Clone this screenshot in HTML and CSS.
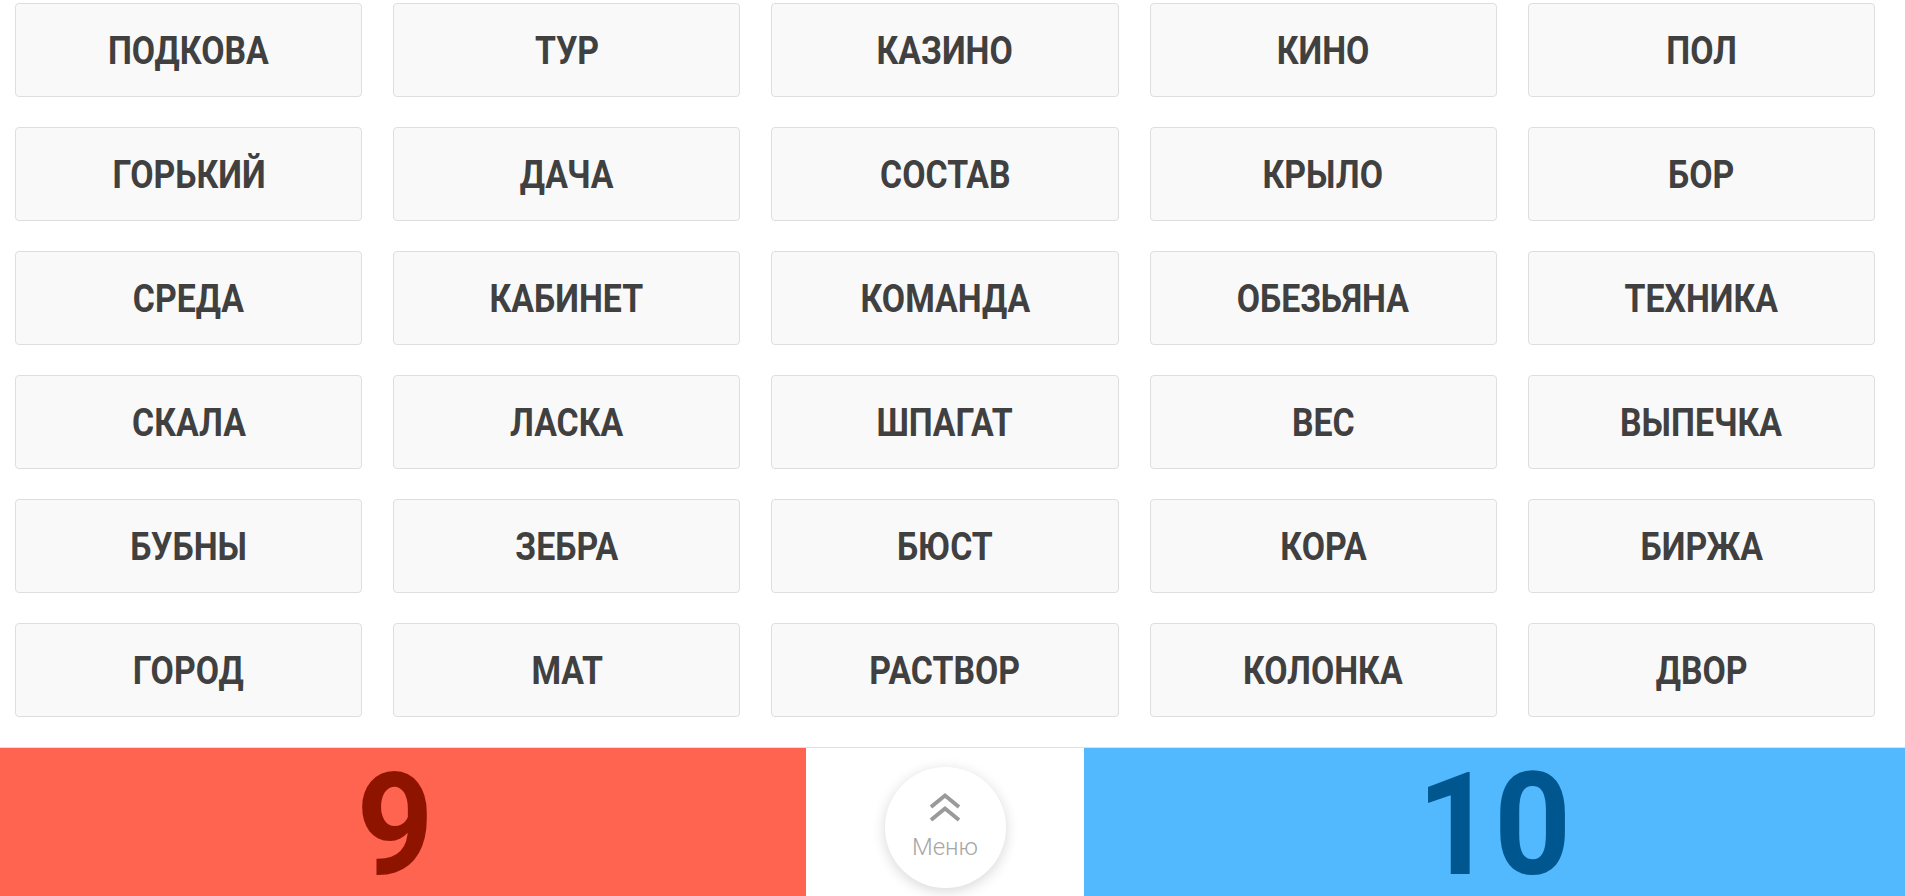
FILE: index.html
```html
<!DOCTYPE html>
<html lang="ru">
<head>
  <meta charset="UTF-8" />
  <meta name="viewport" content="width=device-width, initial-scale=1.0"/>
  <title>Игра</title>
  <link rel="stylesheet" href="styles.css">
</head>
<body>
  <div class="board">
    <div class="card"><span>ПОДКОВА</span></div>
    <div class="card"><span>ТУР</span></div>
    <div class="card"><span>КАЗИНО</span></div>
    <div class="card"><span>КИНО</span></div>
    <div class="card"><span>ПОЛ</span></div>

    <div class="card"><span>ГОРЬКИЙ</span></div>
    <div class="card"><span>ДАЧА</span></div>
    <div class="card"><span>СОСТАВ</span></div>
    <div class="card"><span>КРЫЛО</span></div>
    <div class="card"><span>БОР</span></div>

    <div class="card"><span>СРЕДА</span></div>
    <div class="card"><span>КАБИНЕТ</span></div>
    <div class="card"><span>КОМАНДА</span></div>
    <div class="card"><span>ОБЕЗЬЯНА</span></div>
    <div class="card"><span>ТЕХНИКА</span></div>

    <div class="card"><span>СКАЛА</span></div>
    <div class="card"><span>ЛАСКА</span></div>
    <div class="card"><span>ШПАГАТ</span></div>
    <div class="card"><span>ВЕС</span></div>
    <div class="card"><span>ВЫПЕЧКА</span></div>

    <div class="card"><span>БУБНЫ</span></div>
    <div class="card"><span>ЗЕБРА</span></div>
    <div class="card"><span>БЮСТ</span></div>
    <div class="card"><span>КОРА</span></div>
    <div class="card"><span>БИРЖА</span></div>

    <div class="card"><span>ГОРОД</span></div>
    <div class="card"><span>МАТ</span></div>
    <div class="card"><span>РАСТВОР</span></div>
    <div class="card"><span>КОЛОНКА</span></div>
    <div class="card"><span>ДВОР</span></div>
  </div>

  <div class="score-bar">
    <div class="score red"><span>9</span></div>
    <div class="menu-cell">
      <button class="menu-btn" type="button">
        <svg width="34" height="31" viewBox="0 0 34 31" fill="none" stroke="#9a9a9a" stroke-width="4">
          <path d="M3 15 L17 3.5 L31 15" />
          <path d="M3 28 L17 16.5 L31 28" />
        </svg>
        <span>Меню</span>
      </button>
    </div>
    <div class="score blue"><span>10</span></div>
  </div>
</body>
</html>
```

FILE: styles.css
```css
html, body {
  margin: 0;
  height: 100%;
}
body {
  font-family: Roboto, "Liberation Sans", sans-serif;
  background-color: #fff;
  display: flex;
  flex-direction: column;
  overflow: hidden;
}
.board {
  display: grid;
  grid-template-columns: repeat(5, 1fr);
  grid-auto-rows: 94px;
  column-gap: 31px;
  row-gap: 30px;
  padding: 3px 30px 0 15px;
}
.card {
  display: flex;
  align-items: center;
  justify-content: center;
  background-color: #f9f9f9;
  border: 1px solid #dedede;
  border-radius: 4px;
  box-sizing: border-box;
  color: #404040;
  font-weight: 700;
  font-size: 38px;
}
/* Schrift etwas schmaler, wie die Condensed-Variante */
.card span {
  display: inline-block;
  transform: scaleX(0.89);
  margin-top: 2px;
}
.score-bar {
  margin-top: auto;
  height: 148px;
  border-top: 1px solid #e0e0e0;
  display: grid;
  grid-template-columns: 806px 278px 1fr;
}
.score {
  display: flex;
  align-items: center;
  justify-content: center;
  font-size: 143px;
  font-weight: 700;
  line-height: 140px;
  padding-top: 6px;
  box-sizing: border-box;
}
.score span {
  display: inline-block;
  transform: scaleX(0.94);
}
.red {
  background-color: #ff6450;
  color: #8f1400;
}
.red span {
  margin-right: 16px;
}
.blue {
  background-color: #52b9fe;
  color: #00578f;
}
.menu-cell {
  display: flex;
  justify-content: center;
  padding-top: 19px;
}
.menu-btn {
  width: 121px;
  height: 121px;
  border-radius: 50%;
  border: none;
  background-color: #fff;
  box-shadow: 0 3px 14px rgba(0, 0, 0, 0.16);
  display: flex;
  flex-direction: column;
  align-items: center;
  padding: 25px 0 0;
  font-family: Roboto, sans-serif;
  font-weight: 300;
  font-size: 24px;
  color: #a6a6a6;
  cursor: pointer;
}
.menu-btn span {
  margin-top: 10px;
}
```
